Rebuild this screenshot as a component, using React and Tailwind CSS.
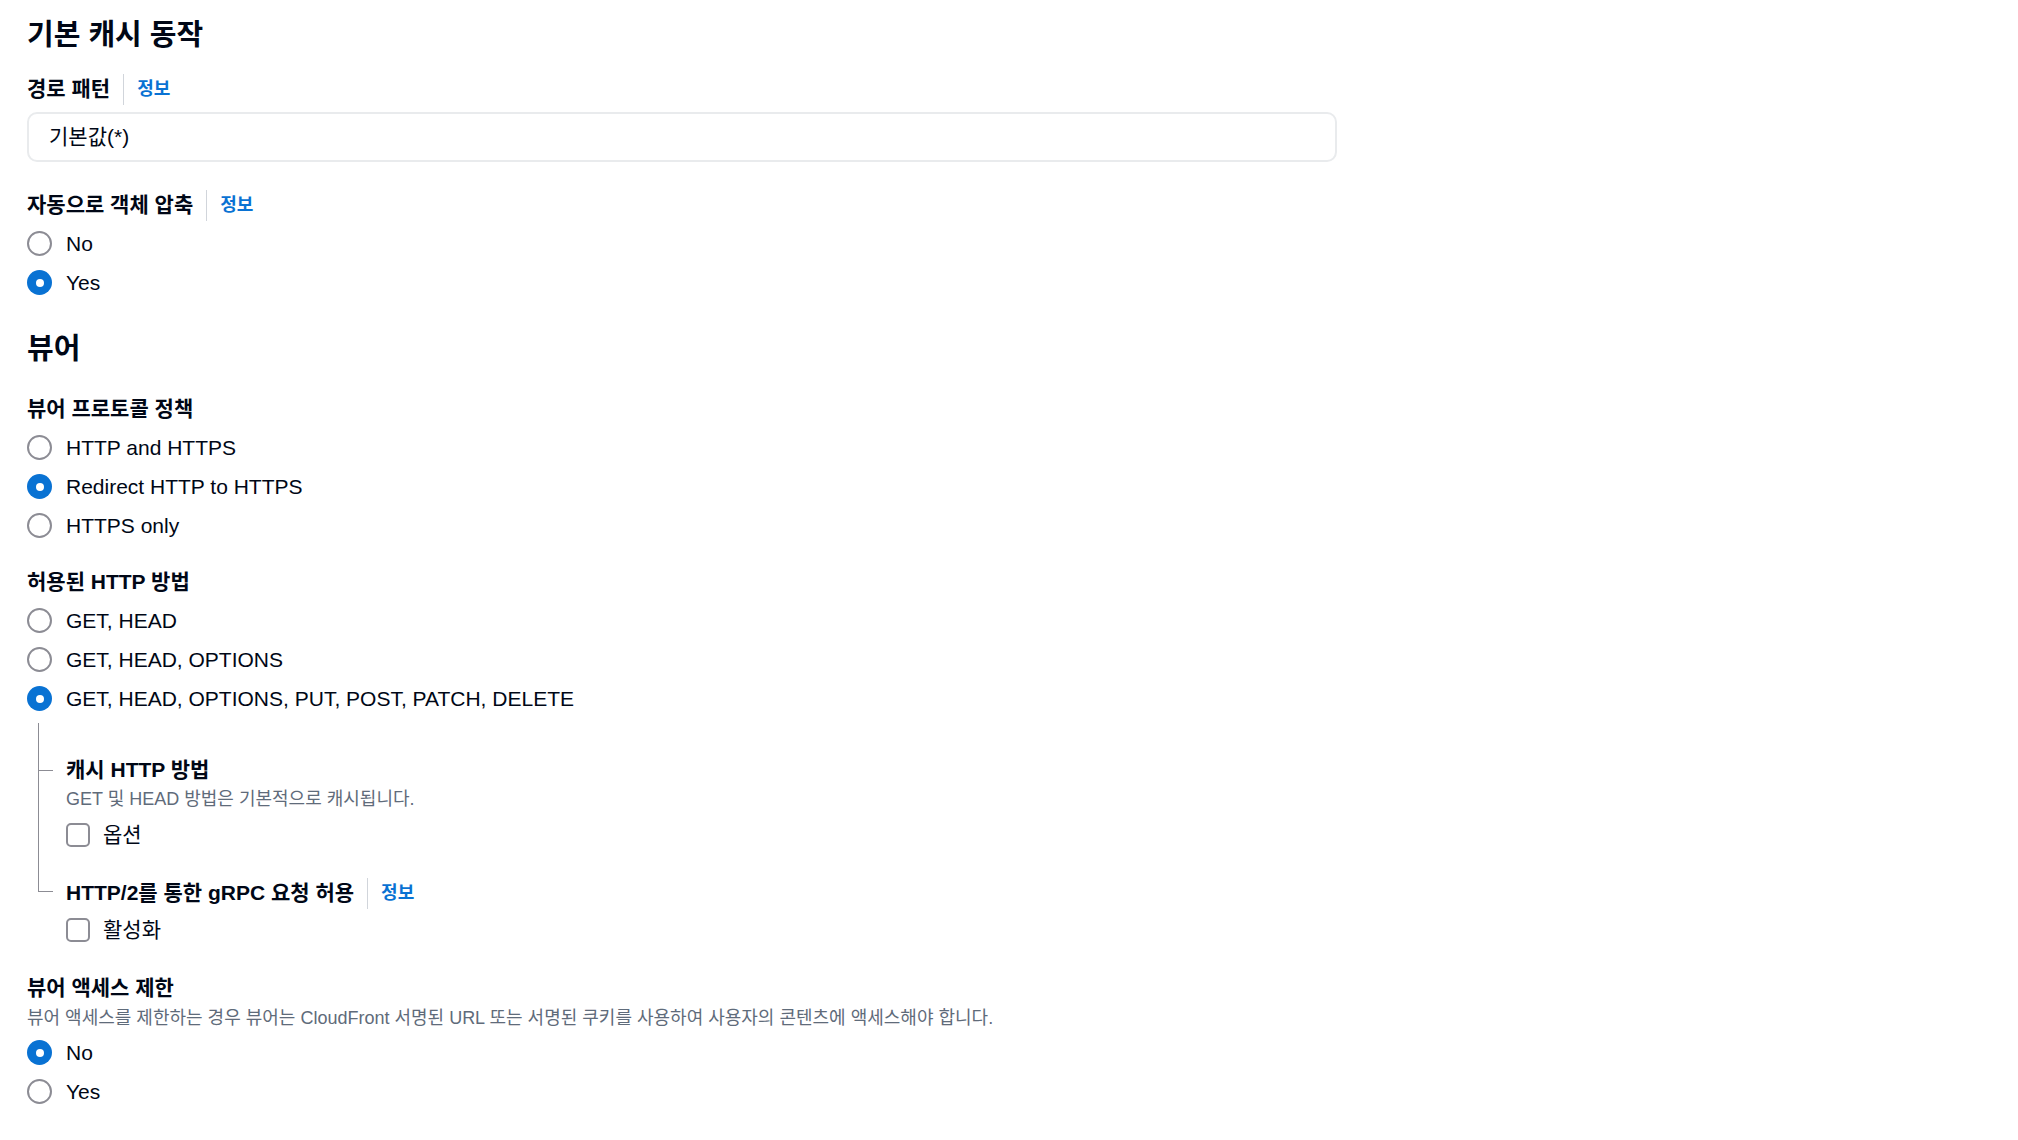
import { useState } from "react";

const font = "font-['Liberation_Sans','Noto_Sans_CJK_KR',sans-serif]";

function InfoLabel({ children, info }) {
  return (
    <div className="flex items-center h-[30px]">
      <span className="text-[21px] font-bold text-[#000716] leading-[30px]">{children}</span>
      {info && (
        <span className="ml-[13px] pl-[13px] h-[31px] flex items-center border-l border-[#d1d5db] text-[18px] font-bold text-[#0972d3]">
          정보
        </span>
      )}
    </div>
  );
}

function Radio({ checked, label, onClick }) {
  return (
    <div className="flex items-center h-[39px] cursor-pointer" onClick={onClick}>
      {checked ? (
        <span className="w-[25px] h-[25px] rounded-full bg-[#0972d3] flex items-center justify-center">
          <span className="w-[8px] h-[8px] rounded-full bg-white" />
        </span>
      ) : (
        <span className="w-[25px] h-[25px] rounded-full border-[2.5px] border-[#8c8c94] bg-white" />
      )}
      <span className="ml-[14px] text-[21px] text-[#000716]">{label}</span>
    </div>
  );
}

function RadioGroup({ options, value, onChange }) {
  return (
    <div className="flex flex-col">
      {options.map((o) => (
        <Radio key={o} label={o} checked={value === o} onClick={() => onChange(o)} />
      ))}
    </div>
  );
}

function Checkbox({ label, checked, onClick }) {
  return (
    <div className="flex items-center h-[36px] cursor-pointer" onClick={onClick}>
      <span
        className={
          checked
            ? "w-[24px] h-[24px] rounded-[5px] bg-[#0972d3] border-2 border-[#0972d3]"
            : "w-[24px] h-[24px] rounded-[5px] border-2 border-[#8c8c94] bg-white"
        }
      />
      <span className="ml-[13px] text-[21px] text-[#000716]">{label}</span>
    </div>
  );
}

export default function App() {
  const [compress, setCompress] = useState("Yes");
  const [protocol, setProtocol] = useState("Redirect HTTP to HTTPS");
  const [methods, setMethods] = useState("GET, HEAD, OPTIONS, PUT, POST, PATCH, DELETE");
  const [restrict, setRestrict] = useState("No");
  const [cacheOptions, setCacheOptions] = useState(false);
  const [grpc, setGrpc] = useState(false);

  return (
    <div className={`min-h-screen bg-white ${font} text-[#000716]`}>
      <div className="pl-[27px] pt-[17px] flex flex-col">
        <h2 className="text-[29px] font-bold leading-[36px]">기본 캐시 동작</h2>

        <div className="mt-[21px]">
          <InfoLabel info>경로 패턴</InfoLabel>
        </div>
        <div className="mt-[8px] w-[1310px] h-[50px] rounded-[10px] border-2 border-[#e9ebed] flex items-center px-[20px] text-[21px]">
          기본값(*)
        </div>

        <div className="mt-[28px]">
          <InfoLabel info>자동으로 객체 압축</InfoLabel>
        </div>
        <div className="mt-[4px]">
          <RadioGroup options={["No", "Yes"]} value={compress} onChange={setCompress} />
        </div>

        <h2 className="mt-[29px] text-[29px] font-bold leading-[36px]">뷰어</h2>

        <div className="mt-[27px]">
          <InfoLabel>뷰어 프로토콜 정책</InfoLabel>
        </div>
        <div className="mt-[4px]">
          <RadioGroup
            options={["HTTP and HTTPS", "Redirect HTTP to HTTPS", "HTTPS only"]}
            value={protocol}
            onChange={setProtocol}
          />
        </div>

        <div className="mt-[22px]">
          <InfoLabel>허용된 HTTP 방법</InfoLabel>
        </div>
        <div className="mt-[4px]">
          <RadioGroup
            options={["GET, HEAD", "GET, HEAD, OPTIONS", "GET, HEAD, OPTIONS, PUT, POST, PATCH, DELETE"]}
            value={methods}
            onChange={setMethods}
          />
        </div>

        {/* nested settings with tree connector */}
        <div className="ml-[11px] mt-[5px] flex flex-col">
          <div className="flex">
            <div className="w-[28px] flex flex-col shrink-0">
              <div className="h-[48px] w-[15px] border-l border-b border-[#8c8c94]" />
              <div className="flex-1 border-l border-[#8c8c94]" />
            </div>
            <div className="pt-[32px] flex flex-col">
              <InfoLabel>캐시 HTTP 방법</InfoLabel>
              <div className="text-[18px] leading-[26px] text-[#5f6b7a] mt-[1px]">
                GET 및 HEAD 방법은 기본적으로 캐시됩니다.
              </div>
              <div className="mt-[5px]">
                <Checkbox label="옵션" checked={cacheOptions} onClick={() => setCacheOptions(!cacheOptions)} />
              </div>
            </div>
          </div>
          <div className="flex">
            <div className="w-[28px] flex flex-col shrink-0">
              <div className="h-[39px] w-[15px] border-l border-b border-[#8c8c94]" />
            </div>
            <div className="pt-[25px] flex flex-col">
              <InfoLabel info>HTTP/2를 통한 gRPC 요청 허용</InfoLabel>
              <div className="mt-[4px]">
                <Checkbox label="활성화" checked={grpc} onClick={() => setGrpc(!grpc)} />
              </div>
            </div>
          </div>
        </div>

        <div className="mt-[25px]">
          <InfoLabel>뷰어 액세스 제한</InfoLabel>
        </div>
        <div className="text-[18px] leading-[26px] text-[#5f6b7a] mt-[2px]">
          뷰어 액세스를 제한하는 경우 뷰어는 CloudFront 서명된 URL 또는 서명된 쿠키를 사용하여 사용자의 콘텐츠에 액세스해야 합니다.
        </div>
        <div className="mt-[2px]">
          <RadioGroup options={["No", "Yes"]} value={restrict} onChange={setRestrict} />
        </div>
      </div>
    </div>
  );
}
